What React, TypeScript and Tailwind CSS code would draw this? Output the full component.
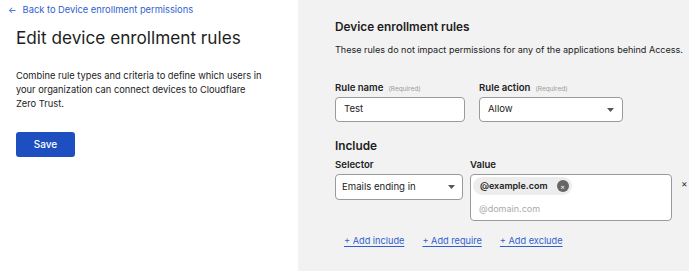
import React from 'react';

function Caret() {
  return (
    <svg width="7" height="4" viewBox="0 0 7 4" className="shrink-0">
      <path d="M0 0h7L3.5 4z" fill="#555" />
    </svg>
  );
}

function FieldLabel({ text, required }: { text: string; required?: boolean }) {
  return (
    <div className="flex items-baseline gap-[5px] h-[14px]">
      <span className="text-[9.6px] font-semibold text-[#222]">{text}</span>
      {required && <span className="text-[6.5px] text-[#999]">(Required)</span>}
    </div>
  );
}

export default function App() {
  return (
    <div className="flex h-[271px] w-[689px] overflow-hidden font-['Inter',sans-serif] text-[#222]">
      {/* left column */}
      <div className="w-[298px] shrink-0 bg-white px-4 pt-[3px]">
        <a href="#" className="flex items-center gap-[6px] -ml-2 text-[9.3px] leading-[13px] text-[#2f5fcf]">
          <span className="text-[9px]">←</span>
          <span>Back to Device enrollment permissions</span>
        </a>
        <h1 className="mt-[10px] text-[17.2px] leading-[24px] font-normal text-[#1d1d1d]">
          Edit device enrollment rules
        </h1>
        <p className="mt-[19px] w-[246px] text-[9.3px] leading-[14px] text-[#222]">
          Combine rule types and criteria to define which users in your organization can connect devices to Cloudflare Zero Trust.
        </p>
        <button className="mt-[21px] h-[25px] w-[59px] rounded-[3px] bg-[#1d4fc1] text-[10px] font-medium text-white">
          Save
        </button>
      </div>

      {/* right column */}
      <div className="flex-1 bg-[#f2f2f2] pl-[37px] pt-[19px]">
        <h2 className="text-[11.8px] leading-[16px] font-semibold text-[#1d1d1d]">Device enrollment rules</h2>
        <p className="mt-[8px] whitespace-nowrap text-[9.05px] leading-[13px] text-[#222]">
          These rules do not impact permissions for any of the applications behind Access.
        </p>

        <div className="mt-[25px] flex gap-[14px]">
          <div className="flex flex-col gap-[2px]">
            <FieldLabel text="Rule name" required />
            <div className="flex h-[25px] w-[130px] items-center rounded-[4px] border border-[#9a9a9a] bg-white px-[8px] text-[9.6px]">
              Test
            </div>
          </div>
          <div className="flex flex-col gap-[2px]">
            <FieldLabel text="Rule action" required />
            <div className="flex h-[25px] w-[144px] items-center justify-between rounded-[4px] border border-[#9a9a9a] bg-white pl-[8px] pr-[8px] text-[9.6px]">
              <span>Allow</span>
              <Caret />
            </div>
          </div>
        </div>

        <h3 className="mt-[16px] text-[11.8px] leading-[16px] font-semibold text-[#1d1d1d]">Include</h3>

        <div className="mt-[4px] flex items-start gap-[7px]">
          <div className="flex flex-col gap-[2px]">
            <div className="h-[14px] text-[9.6px] font-semibold">Selector</div>
            <div className="flex h-[26px] w-[128px] items-center justify-between rounded-[4px] border border-[#9a9a9a] bg-white pl-[6px] pr-[7px] text-[9.6px]">
              <span>Emails ending in</span>
              <Caret />
            </div>
          </div>
          <div className="flex flex-col gap-[2px]">
            <div className="h-[14px] text-[9.6px] font-semibold">Value</div>
            <div className="flex h-[47px] w-[202px] flex-col rounded-[4px] border border-[#9a9a9a] bg-white px-[2px] pt-[2px]">
              <div className="flex h-[18px] w-fit items-center gap-[9px] rounded-full bg-[#ededed] pl-[7px] pr-[3px]">
                <span className="text-[9px] font-semibold">@example.com</span>
                <span className="flex h-[12px] w-[12px] items-center justify-center rounded-full bg-[#666] text-[7px] leading-none text-white">×</span>
              </div>
              <div className="mt-[7px] pl-[6px] text-[9px] text-[#aaa]">@domain.com</div>
            </div>
          </div>
          <span className="mt-[20px] ml-[2px] text-[10px] leading-none text-[#333]">×</span>
        </div>

        <div className="mt-[13px] flex gap-[18px] pl-[9px] text-[9.2px]">
          <a href="#" className="text-[#2f5fcf] underline underline-offset-2">+ Add include</a>
          <a href="#" className="text-[#2f5fcf] underline underline-offset-2">+ Add require</a>
          <a href="#" className="text-[#2f5fcf] underline underline-offset-2">+ Add exclude</a>
        </div>
      </div>
    </div>
  );
}
